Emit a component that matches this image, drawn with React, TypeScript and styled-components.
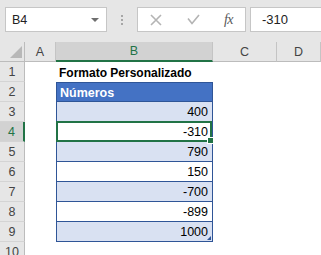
import React from 'react';
import styled, { createGlobalStyle, css } from 'styled-components';

const GlobalStyle = createGlobalStyle`
  html, body {
    margin: 0;
    padding: 0;
    background: #fff;
  }
  body {
    font-family: "Liberation Sans", Arial, sans-serif;
    overflow: hidden;
  }
`;

const Screen = styled.div`
  width: 321px;
  height: 255px;
  overflow: hidden;
  background: #fff;
  display: flex;
  flex-direction: column;
`;

const Toolbar = styled.div`
  flex: none;
  height: 42px;
  box-sizing: border-box;
  background: #e6e6e6;
  display: flex;
  align-items: flex-start;
  padding: 7px 0 0 5px;
`;

const Box = styled.div`
  height: 25px;
  box-sizing: border-box;
  background: #fff;
  border: 1px solid #c6c6c6;
  display: flex;
  align-items: center;
`;

const NameBox = styled(Box)`
  width: 102px;
  justify-content: space-between;
  padding: 0 7px 0 6px;
  font-size: 12.5px;
  color: #222;
`;

const Caret = styled.span`
  width: 0;
  height: 0;
  border-left: 4px solid transparent;
  border-right: 4px solid transparent;
  border-top: 4px solid #6e6e6e;
`;

const Grip = styled.div`
  width: 30px;
  height: 25px;
  display: flex;
  flex-direction: column;
  align-items: center;
  justify-content: center;
  gap: 2px;
  padding-top: 1px;
  box-sizing: border-box;
`;

const GripDot = styled.span`
  width: 2px;
  height: 2px;
  background: #a6a6a6;
`;

const FormulaButtons = styled(Box)`
  width: 109px;
`;

const IconSlot = styled.span<{ $w: number }>`
  width: ${(p) => p.$w}px;
  height: 100%;
  display: flex;
  align-items: center;
  justify-content: center;
`;

const Fx = styled.span`
  font-family: "Liberation Serif", "Times New Roman", serif;
  font-style: italic;
  font-size: 14px;
  color: #595959;
  letter-spacing: -0.5px;
`;

const FormulaInput = styled(Box)`
  flex: 1;
  margin-left: 4px;
  padding-left: 11px;
  border-right: none;
  font-size: 13px;
  color: #222;
`;

const Sheet = styled.div`
  display: grid;
  grid-template-columns: 25px 31px 157px 64px 44px;
  grid-auto-rows: 20px;
`;

const headerBase = css`
  box-sizing: border-box;
  background: #e6e6e6;
  display: flex;
  align-items: center;
  justify-content: center;
  font-size: 12.5px;
  color: #444;
`;

const Corner = styled.div`
  ${headerBase};
  justify-content: flex-end;
  align-items: flex-end;
  padding: 0 2px 3px 0;
  border-right: 1px solid #bcbcbc;
  border-bottom: 1px solid #bcbcbc;
`;

const CornerTriangle = styled.span`
  width: 0;
  height: 0;
  border-left: 12px solid transparent;
  border-bottom: 12px solid #b8b8b8;
`;

const ColHeader = styled.div<{ $selected?: boolean }>`
  ${headerBase};
  border-right: 1px solid #c4c4c4;
  border-bottom: 1px solid #bcbcbc;
  ${(p) =>
    p.$selected &&
    css`
      background: #d2d2d2;
      color: #217346;
      border-bottom: 2px solid #217346;
    `}
`;

const RowHeader = styled.div<{ $selected?: boolean }>`
  ${headerBase};
  border-right: 1px solid #bcbcbc;
  border-bottom: 1px solid #d4d4d4;
  ${(p) =>
    p.$selected &&
    css`
      background: #d2d2d2;
      color: #217346;
      border-right: 2px solid #217346;
    `}
`;

const Cell = styled.div`
  box-sizing: border-box;
  background: #fff;
  display: flex;
  align-items: center;
  padding: 1px 3px 0;
  font-size: 12.5px;
  color: #000;
  white-space: nowrap;
`;

const TitleCell = styled(Cell)`
  font-size: 12px;
  font-weight: bold;
  overflow: visible;
`;

const TableHead = styled(Cell)`
  background: #4472c4;
  color: #fff;
  font-weight: bold;
  border: 1px solid #2f5597;
`;

const TableCell = styled(Cell)<{ $banded: boolean; $last?: boolean }>`
  position: relative;
  justify-content: flex-end;
  padding-right: 4px;
  background: ${(p) => (p.$banded ? '#d9e1f2' : '#fff')};
  border-left: 1px solid #2f5597;
  border-right: 1px solid #2f5597;
  border-bottom: 1px solid #2f5597;
  ${(p) =>
    p.$last &&
    css`
      &::after {
        content: '';
        position: absolute;
        right: 1px;
        bottom: 1px;
        border-left: 4px solid transparent;
        border-bottom: 4px solid #2f5597;
      }
    `}
`;

const SelectionFrame = styled.span`
  position: absolute;
  top: -1px;
  left: -1px;
  right: 0;
  bottom: -1px;
  border: 2px solid #217346;
  z-index: 2;
  pointer-events: none;
`;

const FillHandle = styled.span`
  position: absolute;
  right: -2px;
  bottom: -3px;
  width: 5px;
  height: 5px;
  background: #217346;
  border: 1px solid #fff;
  z-index: 3;
`;

const columns = ['A', 'B', 'C', 'D'];
const values = [400, -310, 790, 150, -700, -899, 1000];

const CloseIcon = () => (
  <svg width="12" height="12" viewBox="0 0 12 12">
    <path d="M1 1 L11 11 M11 1 L1 11" stroke="#b4b4b4" strokeWidth="1.6" fill="none" />
  </svg>
);

const CheckIcon = () => (
  <svg width="13" height="11" viewBox="0 0 13 11">
    <path d="M1 4.5 L5 9.5 L12 1" stroke="#b4b4b4" strokeWidth="1.6" fill="none" />
  </svg>
);

export default function App() {
  const rows = [];
  for (let r = 1; r <= 10; r++) {
    let bCell: React.ReactNode;
    if (r === 1) {
      bCell = <TitleCell>Formato Personalizado</TitleCell>;
    } else if (r === 2) {
      bCell = <TableHead>Números</TableHead>;
    } else if (r <= 9) {
      const selected = r === 4;
      bCell = (
        <TableCell $banded={r % 2 === 1} $last={r === 9}>
          {values[r - 3]}
          {selected && (
            <>
              <SelectionFrame />
              <FillHandle />
            </>
          )}
        </TableCell>
      );
    } else {
      bCell = <Cell />;
    }
    rows.push(
      <React.Fragment key={r}>
        <RowHeader $selected={r === 4}>{r}</RowHeader>
        <Cell />
        {bCell}
        <Cell />
        <Cell />
      </React.Fragment>
    );
  }

  return (
    <Screen>
      <GlobalStyle />
      <Toolbar>
        <NameBox>
          B4
          <Caret />
        </NameBox>
        <Grip>
          <GripDot />
          <GripDot />
          <GripDot />
        </Grip>
        <FormulaButtons>
          <IconSlot $w={36}>
            <CloseIcon />
          </IconSlot>
          <IconSlot $w={38}>
            <CheckIcon />
          </IconSlot>
          <IconSlot $w={33}>
            <Fx>fx</Fx>
          </IconSlot>
        </FormulaButtons>
        <FormulaInput>-310</FormulaInput>
      </Toolbar>
      <Sheet>
        <Corner>
          <CornerTriangle />
        </Corner>
        {columns.map((c) => (
          <ColHeader key={c} $selected={c === 'B'}>
            {c}
          </ColHeader>
        ))}
        {rows}
      </Sheet>
    </Screen>
  );
}
